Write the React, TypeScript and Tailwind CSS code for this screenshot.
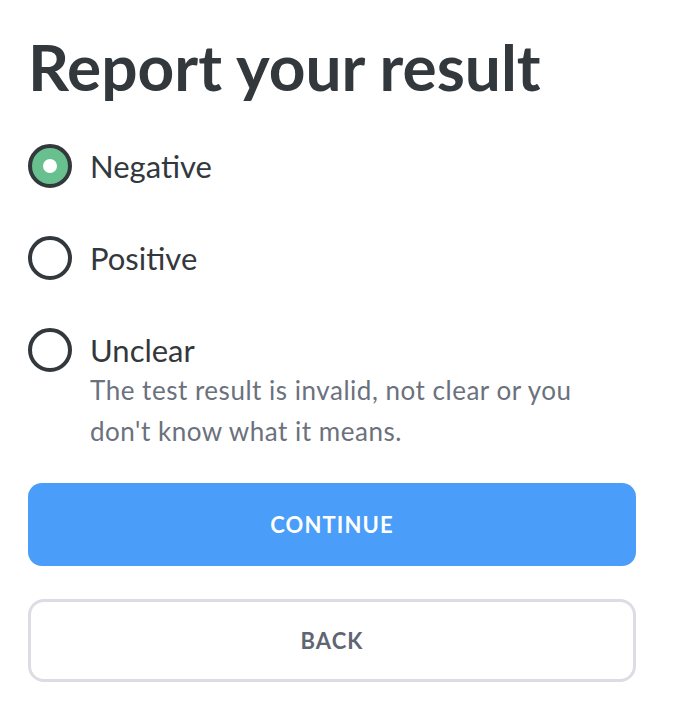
import React, { useState } from 'react';

const options = [
  { id: 'negative', label: 'Negative' },
  { id: 'positive', label: 'Positive' },
  {
    id: 'unclear',
    label: 'Unclear',
    hint: "The test result is invalid, not clear or you don't know what it means.",
  },
];

const Radio: React.FC<{ checked: boolean }> = ({ checked }) => (
  <span
    className={`flex h-[44px] w-[44px] shrink-0 items-center justify-center rounded-full border-[4px] border-[#33383d] ${
      checked ? 'bg-[#67c08e]' : 'bg-white'
    }`}
  >
    {checked && <span className="h-[14px] w-[14px] rounded-full bg-white" />}
  </span>
);

const App: React.FC = () => {
  const [selected, setSelected] = useState('negative');

  return (
    <div className="min-h-screen bg-white px-[28px] pt-[32px] font-['Lato',sans-serif] text-[#33383d]">
      <h1 className="text-[64px] font-bold leading-[70px]">Report your result</h1>

      <div className="mt-[42px] flex flex-col gap-[48px]">
        {options.map((opt) => (
          <div key={opt.id}>
            <button
              type="button"
              onClick={() => setSelected(opt.id)}
              className="flex h-[44px] items-center gap-[18px] text-left"
            >
              <Radio checked={selected === opt.id} />
              <span className="text-[31px] leading-none">{opt.label}</span>
            </button>
            {opt.hint && (
              <p className="ml-[62px] mt-[-2px] max-w-[492px] text-[26px] leading-[41px] tracking-[0.02em] text-[#6b717d]">
                {opt.hint}
              </p>
            )}
          </div>
        ))}
      </div>

      <div className="mt-[31px] flex w-[608px] flex-col gap-[33px]">
        <button
          type="button"
          className="h-[83px] rounded-[14px] bg-[#4a9df8] text-[22px] font-bold tracking-[0.05em] text-white"
        >
          CONTINUE
        </button>
        <button
          type="button"
          className="h-[83px] rounded-[16px] border-[3px] border-[#dcdde4] bg-white text-[22px] font-bold tracking-[0.05em] text-[#5f6672]"
        >
          BACK
        </button>
      </div>
    </div>
  );
};

export default App;
